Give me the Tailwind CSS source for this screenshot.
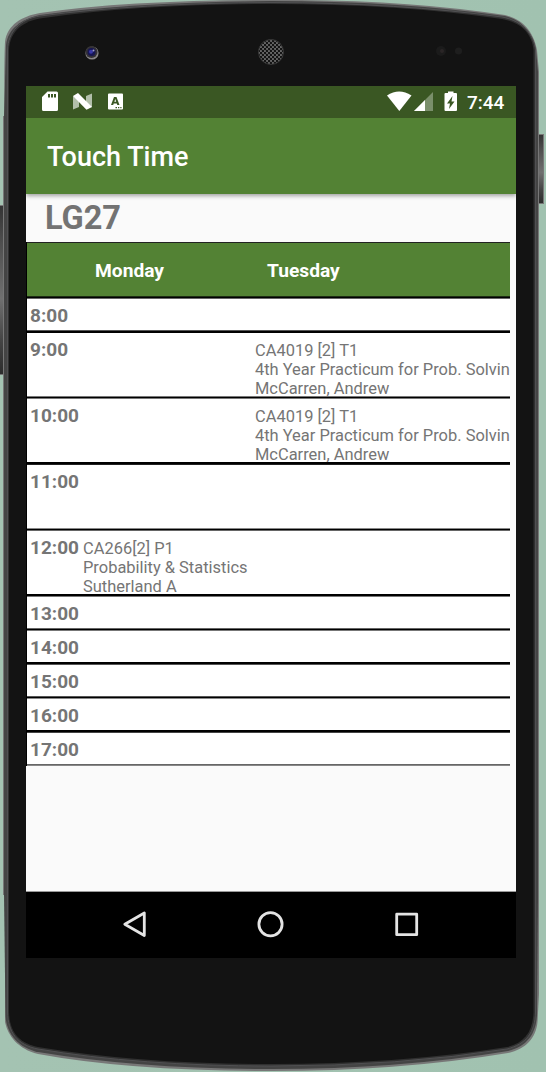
<!DOCTYPE html>
<html lang="en">
<head>
<meta charset="utf-8">
<title>Touch Time</title>
<script src="https://cdn.jsdelivr.net/npm/@tailwindcss/browser@4"></script>
</head>
<body class="bg-[#a3c2b0]">
<div class="relative w-[546px] h-[1072px] overflow-hidden pl-[26px] pt-[86px] font-['Roboto',sans-serif]">
  <!-- Phone body -->
  <svg class="absolute inset-0" width="546" height="1072" viewBox="0 0 546 1072">
    <defs>
      <linearGradient id="bg" x1="0" y1="0" x2="1" y2="0"><stop offset="0" stop-color="#a4c3b2"/><stop offset="1" stop-color="#a1c2b0"/></linearGradient>
      <linearGradient id="key" x1="0" y1="0" x2="0" y2="1"><stop offset="0" stop-color="#333"/><stop offset=".2" stop-color="#4c4c4c"/><stop offset=".55" stop-color="#707070"/><stop offset=".8" stop-color="#444"/><stop offset="1" stop-color="#2c2c2c"/></linearGradient>
      <pattern id="mesh" width="4" height="4" patternUnits="userSpaceOnUse"><rect width="4" height="4" fill="#666"/><circle cx="1" cy="1" r="1.200" fill="#111"/><circle cx="3" cy="3" r="1.200" fill="#111"/></pattern>
    </defs>
    <rect width="546" height="1072" fill="url(#bg)"/>
    <rect x="-2" y="205" width="8" height="170" fill="url(#key)"/>
    <path d="M0 205.500H5M0 374.500H5" stroke="#777"/>
    <rect x="537" y="134.500" width="6.500" height="69" fill="url(#key)" stroke="#777"/>
    <path d="M4.500 116C4 60 5 44 5 42C7 25 22 16 40 13Q130 0 271 0Q400 -1 505 15C525 20 534 34 537 50L539 72V994L537.500 1022C536 1038 526 1049 508 1053Q400 1071 271 1071Q130 1071 38 1054C18 1049 8 1036 5 1022V895H3V116Z" fill="#777"/>
    <path d="M4 117V894L5.500 1015C6 1034 19 1048 38 1052Q140 1069 271 1069Q400 1069 508 1051C528 1046 536 1033 537 1015L538 900V72L536 50C533 34 523 20 505 16Q400 1 271 1Q130 2 40 15C22 19 8 28 6 45Z" fill="#444"/>
    <path d="M7.500 50C8 32 20 19 40 16Q140 3 271 2.500Q400 3 502 17C524 21 534 36 535.500 50V1012C535 1033 526 1044 507 1049Q400 1066 271 1066Q140 1066 38 1049C17 1045 8 1032 7.500 1012Z" fill="#303030" stroke="#505052" stroke-width="1"/>
    <path d="M9 50C9.500 34 20 22 40 18.500Q140 4 271 4Q400 4 502 19C524 23 532 36 533.500 50V1012C533 1032 524 1043 507 1047Q400 1064 271 1064Q140 1064 38 1047C19 1043 9.500 1032 9 1012Z" fill="#131313"/>
    <circle cx="92" cy="53" r="6.600" fill="#8a8788"/><circle cx="91.500" cy="52" r="6" fill="#343236"/><circle cx="91.500" cy="52" r="4" fill="#171653"/><circle cx="91" cy="51.800" r="2" fill="#3838a8"/><circle cx="93.500" cy="50.500" r="1" fill="#a0a0c8"/>
    <circle cx="271" cy="52" r="12.500" fill="url(#mesh)" stroke="#363636"/>
    <circle cx="441" cy="51" r="5" fill="#1b1b1b"/><circle cx="442" cy="51" r="2" fill="#2a2526"/>
    <circle cx="458.500" cy="51" r="3.500" fill="#1e1e1e"/>
  </svg>

  <!-- Screen -->
  <div class="relative w-[490px] h-[872px] bg-[#fafafa] flex flex-col">
    <div class="h-8 shrink-0 bg-[#3a5723] relative flex items-center">
      <svg class="absolute inset-0" width="490" height="32" viewBox="26 86 490 32">
        <path fill="#fff" fill-rule="evenodd" d="M47.500 91.500H56.500Q58 91.500 58 93V109.500Q58 111 56.500 111H43.500Q42 111 42 109.500V97ZM48 94V97.500H50V94ZM51 94V97.500H53V94ZM54 94V97.500H56V94Z"/>
        <path fill="#b2bfaa" d="M73 96L79 99.500V107L73 109.500ZM92 93.500V107.500L86 103V96Z"/>
        <path fill="#fff" d="M73 96L78 93L92 107L86.500 109.700Z"/>
        <path fill="#fff" fill-rule="evenodd" d="M109 93.500H122Q123 93.500 123 94.500V108.500Q123 109.500 122 109.500H109Q108 109.500 108 108.500V94.500Q108 93.500 109 93.500ZM114 97L111 105H113.200L113.700 103.500H116.800L117.300 105H119.500L116.500 97ZM114.300 101.700L115.300 99L116.200 101.700ZM115.500 107V108.200H117V107ZM118 107V108.200H119.300V107ZM120.300 107V108.200H121.500V107Z"/>
        <path fill="#fff" d="M387 95.500Q399 87.500 411.500 95.500L399.300 111Z"/>
        <path fill="#7a8f6b" d="M433 92V111H414Z"/><path fill="#fff" d="M425 100V111H414Z"/>
        <path fill="#fff" fill-rule="evenodd" d="M448 91.500H453.500V93H456Q457 93 457 94V110Q457 111 456 111H445.500Q444.500 111 444.500 110V94Q444.500 93 445.500 93H448ZM452.500 96L447 103.500H450L449 109L454.500 101.500H451.500Z"/>
      </svg>
      <span class="relative ml-[441px] text-[19px] leading-none font-medium text-white whitespace-nowrap">7:44</span>
    </div>
    <header class="relative h-[76px] shrink-0 bg-[#538234] shadow-[0_2px_4px_rgba(0,0,0,0.35)] [clip-path:inset(0_0_-8px_0)] flex items-center pl-[21px] pt-[3px]">
      <h1 class="text-[27px] leading-none font-medium text-white whitespace-nowrap">Touch Time</h1>
    </header>
    <h2 class="h-[48px] shrink-0 pl-[19px] text-[32.5px] leading-[48px] font-bold text-[#737373]">LG27</h2>

    <section class="w-[484px] shrink-0 border-l border-black bg-white text-[#757575]">
      <div class="h-px bg-[#222]"></div>
      <div class="h-[53px] bg-[#538234] text-white font-bold text-[19.2px] leading-[55px] flex"><span class="ml-[68px] w-[172px]">Monday</span><span>Tuesday</span></div>
      <div class="h-[3px] bg-black border-t border-t-[#1c2c12] border-b border-b-[#666]"></div>
      <div class="h-[31px] pl-[3px] pt-[6px] font-bold text-[19px] leading-[22px]">8:00</div>
      <div class="h-[3px] bg-black border-t border-t-[#555]"></div>
      <div class="h-[63px] pl-[3px] pt-[6px] flex"><b class="w-[225px] shrink-0 text-[19px] leading-[22px]">9:00</b><p class="pt-[2px] text-[16.45px] leading-[19px] whitespace-nowrap">CA4019 [2] T1<br>4th Year Practicum for Prob. Solvin<br>McCarren, Andrew</p></div>
      <div class="h-[3px] bg-black border-t border-t-[#777] border-b border-b-[#777]"></div>
      <div class="h-[63px] pl-[3px] pt-[6px] flex"><b class="w-[225px] shrink-0 text-[19px] leading-[22px]">10:00</b><p class="pt-[2px] text-[16.45px] leading-[19px] whitespace-nowrap">CA4019 [2] T1<br>4th Year Practicum for Prob. Solvin<br>McCarren, Andrew</p></div>
      <div class="h-[3px] bg-black border-b border-b-[#222]"></div>
      <div class="h-[63px] pl-[3px] pt-[6px] font-bold text-[19px] leading-[22px]">11:00</div>
      <div class="h-[3px] bg-black border-t border-t-[#888] border-b border-b-[#666]"></div>
      <div class="h-[63px] pl-[3px] pt-[6px] flex"><b class="w-[53px] shrink-0 text-[19px] leading-[22px]">12:00</b><p class="pt-[2px] text-[16.45px] leading-[19px] whitespace-nowrap">CA266[2] P1<br>Probability &amp; Statistics<br>Sutherland A</p></div>
      <div class="h-[3px] bg-black border-b border-b-[#777]"></div>
      <div class="h-[31px] pl-[3px] pt-[6px] font-bold text-[19px] leading-[22px]">13:00</div>
      <div class="h-[3px] bg-black border-t border-t-[#666] border-b border-b-[#777]"></div>
      <div class="h-[31px] pl-[3px] pt-[6px] font-bold text-[19px] leading-[22px]">14:00</div>
      <div class="h-[3px] bg-black border-b border-b-[#555]"></div>
      <div class="h-[31px] pl-[3px] pt-[6px] font-bold text-[19px] leading-[22px]">15:00</div>
      <div class="h-[3px] bg-black border-t border-t-[#555] border-b border-b-[#888]"></div>
      <div class="h-[31px] pl-[3px] pt-[6px] font-bold text-[19px] leading-[22px]">16:00</div>
      <div class="h-[3px] bg-black border-b border-b-[#444]"></div>
      <div class="h-[31px] pl-[3px] pt-[6px] font-bold text-[19px] leading-[22px]">17:00</div>
      <div class="h-[2px] bg-[#888] border-t border-t-[#666]"></div>
    </section>

    <nav class="mt-auto h-[67px] shrink-0 bg-black border-t border-[#999]">
      <svg width="490" height="66" viewBox="26 892 490 66" fill="none" stroke="#e4e4e4" stroke-width="2.800" stroke-linejoin="round">
        <path d="M144.300 913V935.500L124.800 924.300Z"/><circle cx="270.500" cy="924.300" r="11.600"/><rect x="396.700" y="914.200" width="20" height="20.500"/>
      </svg>
    </nav>
  </div>
</div>
</body>
</html>
